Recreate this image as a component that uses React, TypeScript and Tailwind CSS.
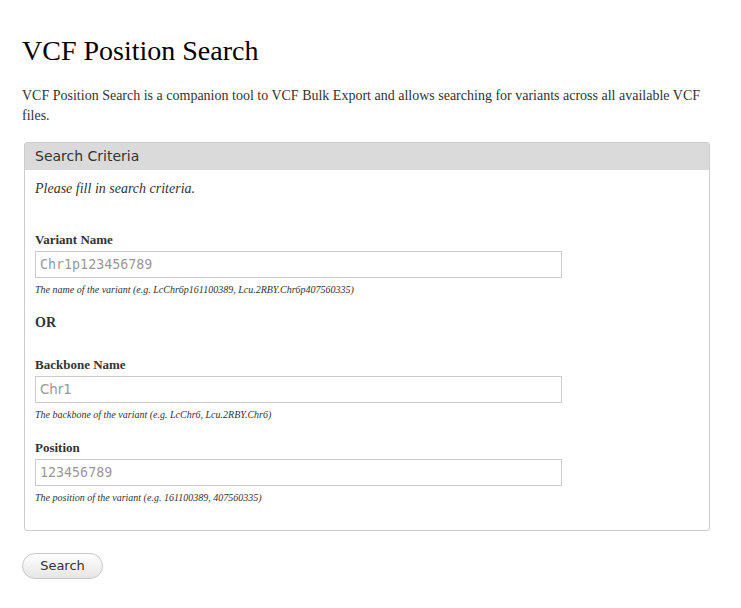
export default function App() {
  const serif = 'font-["Liberation_Serif","Times_New_Roman",serif]';
  return (
    <div className={`min-h-[608px] bg-white px-[22px] pt-[34px] text-[#333] ${serif}`}>
      <h1 className="text-[28px] leading-[34px] text-black">VCF Position Search</h1>
      <p className="mt-[18px] text-[14px] leading-[20px]">
        VCF Position Search is a companion tool to VCF Bulk Export and allows searching for variants across all available VCF files.
      </p>
      <fieldset className="mt-[16px] ml-[2px] mr-[9px] rounded-[3px] border border-[#ccc]">
        <div className='h-[27px] bg-[#dadada] px-[10px] font-["DejaVu_Sans",sans-serif] text-[14px] leading-[27px] text-[#333]'>
          Search Criteria
        </div>
        <div className="px-[10px] pb-[25px]">
          <p className="mt-[9px] text-[14px] italic leading-[20px]">Please fill in search criteria.</p>
          <Field label="Variant Name" placeholder="Chr1p123456789" mono className="mt-[33px]"
            desc="The name of the variant (e.g. LcChr6p161100389, Lcu.2RBY.Chr6p407560335)" />
          <div className="mt-[17px] text-[14px] font-bold leading-[18px]">OR</div>
          <Field label="Backbone Name" placeholder="Chr1" className="mt-[25px]"
            desc="The backbone of the variant (e.g. LcChr6, Lcu.2RBY.Chr6)" />
          <Field label="Position" placeholder="123456789" mono className="mt-[18px]"
            desc="The position of the variant (e.g. 161100389, 407560335)" />
        </div>
      </fieldset>
      <button className='mt-[22px] h-[26px] w-[81px] rounded-full border border-[#c8c8c8] bg-gradient-to-b from-[#fefefe] to-[#e6e6e6] font-["DejaVu_Sans",sans-serif] text-[13px] text-[#333]'>
        Search
      </button>
    </div>
  );
}

function Field({ label, placeholder, desc, mono, className }: { label: string; placeholder: string; desc: string; mono?: boolean; className?: string }) {
  return (
    <div className={className}>
      <label className="block text-[13px] font-bold leading-[16px]">{label}</label>
      <input
        placeholder={placeholder}
        className={`mt-[3px] block h-[27px] w-[527px] border border-[#ccc] px-[4px] text-[13.33px] placeholder:text-[#999] outline-none ${mono ? 'font-["DejaVu_Sans_Mono",monospace]' : 'font-["DejaVu_Sans",sans-serif]'}`}
      />
      <div className="mt-[5px] text-[10px] italic leading-[14px]">{desc}</div>
    </div>
  );
}
